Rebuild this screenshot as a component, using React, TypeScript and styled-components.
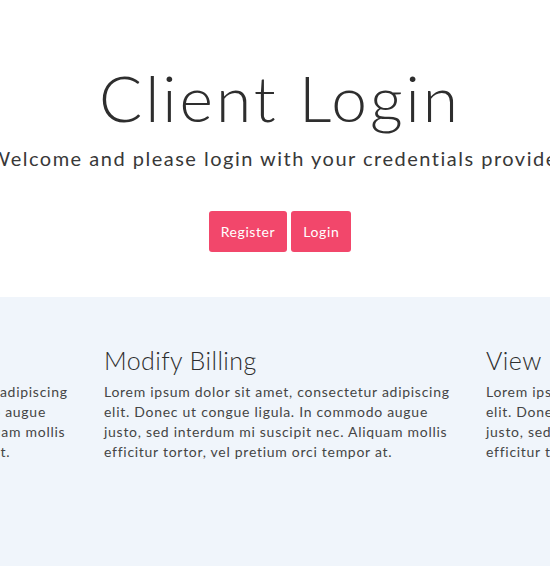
import React from "react";
import styled, { createGlobalStyle } from "styled-components";

const Global = createGlobalStyle`
  html, body { margin: 0; padding: 0; overflow: hidden; background: #ffffff; }
  body { font-family: "Lato", "Open Sans", sans-serif; color: #333333; }
`;

const Page = styled.div`
  width: 560px;
  height: 566px;
  display: flex;
  flex-direction: column;
`;

const Hero = styled.header`
  display: flex;
  flex-direction: column;
  align-items: center;
  padding: 63px 0 45px;
  background: #ffffff;
`;

const Title = styled.h1`
  margin: 0;
  font-family: "Lato", sans-serif;
  font-weight: 300;
  font-size: 64px;
  line-height: 70px;
  letter-spacing: 3px;
  color: #2e2e2e;
  white-space: nowrap;
`;

const Subtitle = styled.p`
  margin: 11px 0 0;
  font-family: "Lato", sans-serif;
  font-weight: 400;
  font-size: 20px;
  line-height: 28px;
  letter-spacing: 1.5px;
  color: #383838;
  white-space: nowrap;
`;

const Actions = styled.div`
  display: flex;
  gap: 4px;
  margin-top: 39px;
`;

const Button = styled.button`
  font-family: "Lato", sans-serif;
  font-size: 14px;
  line-height: 19px;
  letter-spacing: 0.6px;
  padding: 11px 12px;
  border: none;
  border-radius: 3px;
  background: #f2476b;
  color: #ffffff;
  cursor: pointer;
`;

const Features = styled.section`
  flex: 1;
  background: #f0f5fb;
  padding-top: 48px;
  display: flex;
  justify-content: center;
  overflow: hidden;
`;

const Row = styled.div`
  display: flex;
  flex: none;
  width: 1146px;
`;

const Column = styled.article`
  flex: none;
  width: 382px;
  box-sizing: border-box;
  padding: 0 15px;
`;

const FeatureTitle = styled.h3`
  margin: 0;
  font-family: "Lato", sans-serif;
  font-weight: 300;
  font-size: 25px;
  line-height: 30px;
  letter-spacing: 0.4px;
  color: #2e2e2e;
  white-space: nowrap;
`;

const FeatureText = styled.p`
  margin: 7px 0 0;
  font-family: "Lato", sans-serif;
  font-size: 14px;
  line-height: 20px;
  letter-spacing: 0.72px;
  color: #454545;
`;

const lorem =
  "Lorem ipsum dolor sit amet, consectetur adipiscing elit. Donec ut congue ligula. In commodo augue justo, sed interdum mi suscipit nec. Aliquam mollis efficitur tortor, vel pretium orci tempor at.";

const features = ["Update Details", "Modify Billing", "View Invoices"];

export default function App() {
  return (
    <Page>
      <Global />
      <Hero>
        <Title>Client Login</Title>
        <Subtitle>Welcome and please login with your credentials provided</Subtitle>
        <Actions>
          <Button>Register</Button>
          <Button>Login</Button>
        </Actions>
      </Hero>
      <Features>
        <Row>
          {features.map((f) => (
            <Column key={f}>
              <FeatureTitle>{f}</FeatureTitle>
              <FeatureText>{lorem}</FeatureText>
            </Column>
          ))}
        </Row>
      </Features>
    </Page>
  );
}
